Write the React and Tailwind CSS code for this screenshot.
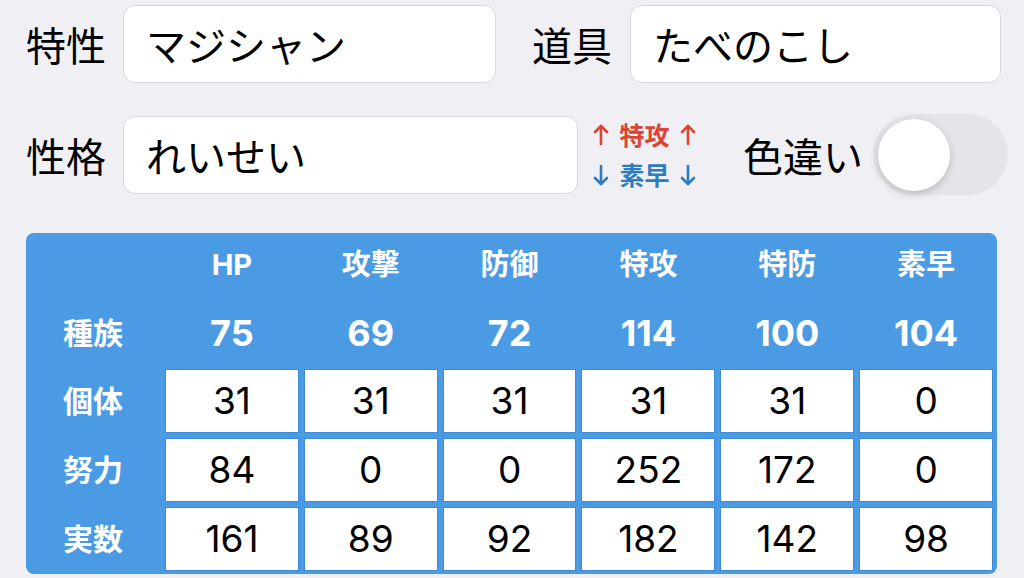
import React from 'react';

const jp = { fontFamily: '"Noto Sans CJK JP", "Noto Sans", sans-serif' };
const num = { fontFamily: 'Inter, "Noto Sans CJK JP", sans-serif' };

const stats = [
  { name: 'HP', base: 75, iv: 31, ev: 84, real: 161 },
  { name: '攻撃', base: 69, iv: 31, ev: 0, real: 89 },
  { name: '防御', base: 72, iv: 31, ev: 0, real: 92 },
  { name: '特攻', base: 114, iv: 31, ev: 252, real: 182 },
  { name: '特防', base: 100, iv: 31, ev: 172, real: 142 },
  { name: '素早', base: 104, iv: 0, ev: 0, real: 98 },
];

const Field = ({ value, className = '' }) => (
  <div
    className={`h-[78px] flex items-center pl-[22px] bg-white rounded-[12px] border border-[#d9d9de] text-[40px] text-black ${className}`}
  >
    {value}
  </div>
);

const Toggle = () => (
  <div className="w-[135px] h-[81px] rounded-full bg-[#e4e4e9] flex items-center pl-[5px]">
    <div className="w-[72px] h-[72px] rounded-full bg-white shadow-[0_3px_8px_rgba(0,0,0,0.18)]" />
  </div>
);

const Arrow = ({ down }) => (
  <svg width="16" height="22" viewBox="0 0 16 22" fill="none" stroke="currentColor" strokeWidth="2.6" strokeLinecap="round" strokeLinejoin="round">
    {down ? (
      <>
        <path d="M8 2v18" />
        <path d="M2 14l6 6 6-6" />
      </>
    ) : (
      <>
        <path d="M8 20V2" />
        <path d="M2 8l6-6 6 6" />
      </>
    )}
  </svg>
);

// nature modifier line: arrow, stat name, arrow
const Mod = ({ down, stat, color }) => (
  <div className={`w-[103px] flex items-center justify-between h-[40px] ${color}`}>
    <Arrow down={down} />
    <span className="text-[25px] font-bold leading-none">{stat}</span>
    <Arrow down={down} />
  </div>
);

export default function App() {
  const rows = [
    { label: '個体', key: 'iv' },
    { label: '努力', key: 'ev' },
    { label: '実数', key: 'real' },
  ];

  return (
    <div className="w-[1024px] h-[578px] bg-[#efeff4] overflow-hidden" style={jp}>
      {/* top inputs */}
      <div className="pt-[5px] pl-[26px]">
        <div className="flex items-center">
          <span className="w-[80px] text-[40px] leading-none text-black">特性</span>
          <Field value="マジシャン" className="ml-[17px] w-[373px]" />
          <span className="ml-[36px] w-[80px] text-[40px] leading-none text-black">道具</span>
          <Field value="たべのこし" className="ml-[18px] w-[371px]" />
        </div>

        <div className="flex items-center mt-[31px]">
          <span className="w-[80px] text-[40px] leading-none text-black">性格</span>
          <Field value="れいせい" className="ml-[17px] w-[455px]" />
          <div className="ml-[15px] flex flex-col">
            <Mod stat="特攻" color="text-[#dc4332]" />
            <Mod down stat="素早" color="text-[#2b7cc0]" />
          </div>
          <span className="ml-[47px] text-[40px] leading-none text-black">色違い</span>
          <div className="ml-[10px]">
            <Toggle />
          </div>
        </div>
      </div>

      {/* stats table */}
      <div
        className="mt-[38px] ml-[26px] w-[971px] bg-[#4b9be4] rounded-[8px] pr-[4px] pb-[3px]"
        style={num}
      >
        <div className="grid grid-cols-[134px_repeat(6,1fr)] gap-x-[5px] h-[64px] items-center text-white font-bold text-[29px]">
          <span />
          {stats.map((s) => (
            <span key={s.name} className="text-center">{s.name}</span>
          ))}
        </div>
        <div className="grid grid-cols-[134px_repeat(6,1fr)] gap-x-[5px] h-[72px] items-center text-white font-bold">
          <span className="text-center text-[30px]">種族</span>
          {stats.map((s) => (
            <span key={s.name} className="text-center text-[36px]">{s.base}</span>
          ))}
        </div>
        <div className="flex flex-col gap-y-[5px]">
          {rows.map((r) => (
            <div key={r.key} className="grid grid-cols-[134px_repeat(6,1fr)] gap-x-[5px] h-[64px]">
              <span className="flex items-center justify-center text-white font-bold text-[30px]">
                {r.label}
              </span>
              {stats.map((s) => (
                <div
                  key={s.name}
                  className="bg-white flex items-center justify-center text-[37px] text-black border border-[#3f8bd8]"
                >
                  {s[r.key]}
                </div>
              ))}
            </div>
          ))}
        </div>
      </div>
    </div>
  );
}
